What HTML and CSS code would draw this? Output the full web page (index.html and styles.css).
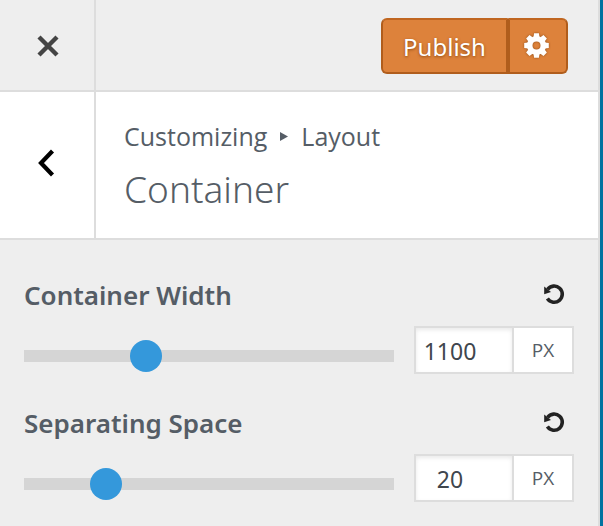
FILE: index.html
```html
<!DOCTYPE html>
<html lang="en">
<head>
<meta charset="utf-8">
<title>Customizing: Container</title>
<link rel="stylesheet" href="styles.css">
</head>
<body>
<main class="customizer">
  <header class="topbar">
    <button class="nav-button close" type="button" aria-label="Close">
      <svg width="22" height="22" viewBox="0 0 22 22" aria-hidden="true"><path d="M2 2 20 20M20 2 2 20" fill="none" stroke="#444" stroke-width="4.4"/></svg>
    </button>
    <div class="actions">
      <button class="action publish" type="button">Publish</button>
      <button class="action settings" type="button" aria-label="Publish settings">
        <svg width="26" height="26" viewBox="-12.5 -12.5 26 26" aria-hidden="true">
          <g fill="#fff">
            <path fill-rule="evenodd" d="M-9.6 0a9.6 9.6 0 1 0 19.2 0a9.6 9.6 0 1 0-19.2 0M-4 0a4 4 0 1 0 8 0a4 4 0 1 0-8 0"/>
            <path id="teeth" d="M-2.4-12.3H2.4L3-8.5H-3ZM-2.4 12.3H2.4L3 8.5H-3ZM-12.3-2.4V2.4L-8.5 3V-3ZM12.3-2.4V2.4L8.5 3V-3Z"/>
            <use href="#teeth" transform="rotate(45)"/>
          </g>
        </svg>
      </button>
    </div>
  </header>
  <section class="section-head">
    <button class="nav-button back" type="button" aria-label="Back">
      <svg width="20" height="28" viewBox="0 0 20 28" aria-hidden="true"><path d="M15.5 2 4 14 15.5 26" fill="none" stroke="#000" stroke-width="4.2"/></svg>
    </button>
    <div class="titles">
      <p class="crumbs">Customizing <svg class="crumb-arrow" width="8" height="9" viewBox="0 0 8 9" aria-hidden="true"><path d="M0 0 8 4.5 0 9Z" fill="#555d66"/></svg> Layout</p>
      <h1 class="title">Container</h1>
    </div>
  </section>
  <div class="controls">
    <div class="control">
      <div class="control-head">
        <label class="control-label" for="width">Container Width</label>
        <button class="reset" type="button" aria-label="Reset container width">
          <svg width="22" height="22" viewBox="0 0 22 22" aria-hidden="true"><path d="M4.6 6.4A8.1 8.1 0 1 1 4.4 15.6" fill="none" stroke="#222" stroke-width="3.6"/><path d="M1.2 3.6V11.2L8 8.9Z" fill="#222"/></svg>
        </button>
      </div>
      <div class="control-row">
        <input class="slider" type="range" min="700" max="1975" value="1100" aria-label="Container width slider">
        <div class="field">
          <input class="number" id="width" type="number" value="1100">
          <span class="unit">PX</span>
        </div>
      </div>
    </div>
    <div class="control">
      <div class="control-head">
        <label class="control-label" for="space">Separating Space</label>
        <button class="reset" type="button" aria-label="Reset separating space">
          <svg width="22" height="22" viewBox="0 0 22 22" aria-hidden="true"><path d="M4.6 6.4A8.1 8.1 0 1 1 4.4 15.6" fill="none" stroke="#222" stroke-width="3.6"/><path d="M1.2 3.6V11.2L8 8.9Z" fill="#222"/></svg>
        </button>
      </div>
      <div class="control-row">
        <input class="slider" type="range" min="0" max="102" value="20" aria-label="Separating space slider">
        <div class="field">
          <input class="number" id="space" type="number" value="20">
          <span class="unit">PX</span>
        </div>
      </div>
    </div>
  </div>
</main>
</body>
</html>
```
FILE: styles.css
```css
* { box-sizing: border-box; }

body {
  margin: 0;
  background: #0073a0;
  color: #555d66;
  font-family: "Noto Sans", "Open Sans", sans-serif;
}

button { padding: 0; border: 0; background: none; font: inherit; cursor: pointer; }
svg { display: block; }

.customizer {
  min-height: 100vh;
  margin-right: 3px;
  border-right: 2px solid #ddd;
  background: #eee;
}

.topbar,
.section-head {
  display: flex;
  border-bottom: 2px solid #ddd;
}

.topbar { height: 92px; }
.section-head { background: #fff; }

.nav-button {
  display: flex;
  flex: none;
  align-items: center;
  justify-content: center;
  width: 96px;
  border-right: 2px solid #ddd;
}

.close { padding: 2px 0 0 2px; }
.back { padding-bottom: 4px; }

.actions {
  display: flex;
  margin: 18px 30px 16px auto;
}

.action {
  display: flex;
  align-items: center;
  justify-content: center;
  border: 2px solid #b05d1c;
  border-top-color: #c06620;
  background: #dd823b;
  color: #fff;
  font-size: 24px;
  text-shadow: 0 1px 3px #8f4a13;
}

.action svg { filter: drop-shadow(0 0 1px #8f4a13); }
.publish { width: 127px; border-radius: 6px 0 0 6px; }
.settings { width: 60px; padding-right: 2px; border-radius: 0 6px 6px 0; }

.titles { padding: 26px 28px; }

.crumbs {
  display: flex;
  align-items: center;
  gap: 13px;
  margin: 0;
  font-family: "Open Sans", "Noto Sans", sans-serif;
  font-size: 25px;
  line-height: 36px;
}

.title {
  margin: 12px 0 0;
  font-size: 37px;
  font-weight: 300;
  line-height: 46px;
}

.controls {
  display: grid;
  gap: 30px;
  padding: 36px 24px 24px;
}

.control-head {
  display: flex;
  align-items: center;
  justify-content: space-between;
  height: 36px;
  padding-right: 9px;
}

.control-label { padding-top: 2px; font-size: 26px; font-weight: 600; }

.control-row {
  display: flex;
  align-items: center;
  gap: 20px;
  margin-top: 12px;
  padding-top: 2px;
}

.slider {
  flex: 1;
  min-width: 0;
  height: 32px;
  margin: 12px 0 0;
  appearance: none;
  background: linear-gradient(#d5d5d5, #d5d5d5) center / 100% 12px no-repeat;
}

.slider::-webkit-slider-thumb {
  width: 32px;
  height: 32px;
  appearance: none;
  border-radius: 50%;
  background: #3498db;
}

.field {
  display: flex;
  width: 160px;
  height: 48px;
  border: 2px solid #ddd;
  background: #fff;
}

.number {
  flex: 1;
  min-width: 0;
  padding: 2px 28px 0 0;
  border: 0;
  background: #fff;
  box-shadow: inset 0 2px 4px #e9e9e9;
  color: #40464d;
  font: inherit;
  font-size: 23px;
  text-align: center;
  appearance: textfield;
}

.number::-webkit-inner-spin-button { margin: 0; appearance: none; }

.unit {
  display: flex;
  align-items: center;
  justify-content: center;
  width: 60px;
  border-left: 2px solid #ddd;
  font-family: "Open Sans", "Noto Sans", sans-serif;
  font-size: 19px;
}
```
